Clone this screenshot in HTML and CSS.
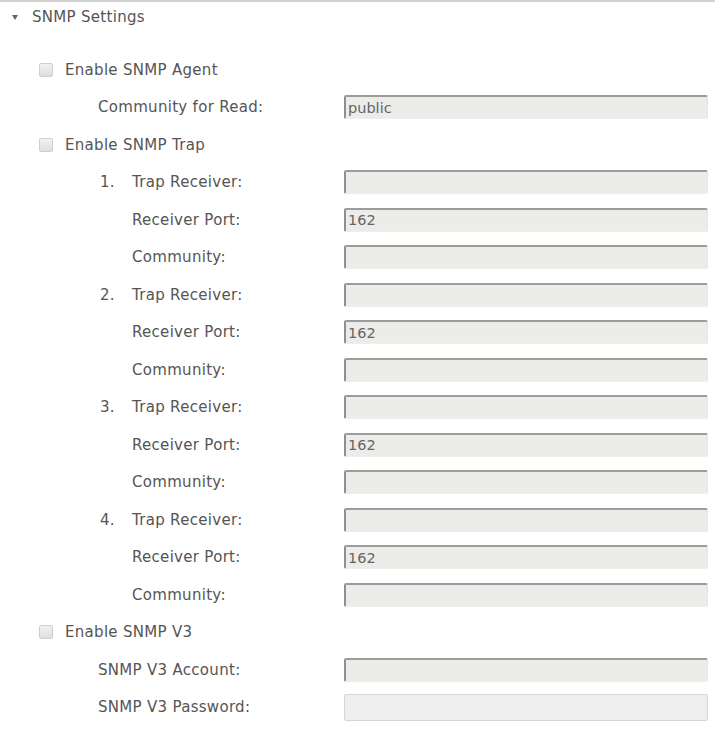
FILE: index.html
```html
<!DOCTYPE html>
<html lang="en">
<head>
  <meta charset="UTF-8" />
  <title>SNMP Settings</title>
  <link rel="stylesheet" href="styles.css">
</head>
<body>
  <div class="settings">
    <div class="title">
      <span class="arrow"></span>
      <span>SNMP Settings</span>
    </div>

    <div class="rows">
      <label class="row check-row"><input type="checkbox" class="box"> Enable SNMP Agent</label>
      <div class="row field-row">
        <span class="label">Community for Read:</span>
        <input class="field" type="text" value="public">
      </div>

      <label class="row check-row"><input type="checkbox" class="box"> Enable SNMP Trap</label>

      <div class="row field-row">
        <span class="label"><span class="num">1.</span>Trap Receiver:</span>
        <input class="field" type="text">
      </div>
      <div class="row field-row">
        <span class="label"><span class="num"></span>Receiver Port:</span>
        <input class="field" type="text" value="162">
      </div>
      <div class="row field-row">
        <span class="label"><span class="num"></span>Community:</span>
        <input class="field" type="text">
      </div>

      <div class="row field-row">
        <span class="label"><span class="num">2.</span>Trap Receiver:</span>
        <input class="field" type="text">
      </div>
      <div class="row field-row">
        <span class="label"><span class="num"></span>Receiver Port:</span>
        <input class="field" type="text" value="162">
      </div>
      <div class="row field-row">
        <span class="label"><span class="num"></span>Community:</span>
        <input class="field" type="text">
      </div>

      <div class="row field-row">
        <span class="label"><span class="num">3.</span>Trap Receiver:</span>
        <input class="field" type="text">
      </div>
      <div class="row field-row">
        <span class="label"><span class="num"></span>Receiver Port:</span>
        <input class="field" type="text" value="162">
      </div>
      <div class="row field-row">
        <span class="label"><span class="num"></span>Community:</span>
        <input class="field" type="text">
      </div>

      <div class="row field-row">
        <span class="label"><span class="num">4.</span>Trap Receiver:</span>
        <input class="field" type="text">
      </div>
      <div class="row field-row">
        <span class="label"><span class="num"></span>Receiver Port:</span>
        <input class="field" type="text" value="162">
      </div>
      <div class="row field-row">
        <span class="label"><span class="num"></span>Community:</span>
        <input class="field" type="text">
      </div>

      <label class="row check-row"><input type="checkbox" class="box"> Enable SNMP V3</label>
      <div class="row field-row">
        <span class="label">SNMP V3 Account:</span>
        <input class="field" type="text">
      </div>
      <div class="row field-row">
        <span class="label">SNMP V3 Password:</span>
        <input class="field flat" type="password">
      </div>
    </div>
  </div>
</body>
</html>
```

FILE: styles.css
```css
body {
  margin: 0;
  background-color: #fff;
  font-family: "DejaVu Sans", Verdana, sans-serif;
  font-size: 15px;
  letter-spacing: 0.3px;
  color: #555;
}
.settings {
  border-top: 2px solid #d2d2d2;
}
.title {
  display: flex;
  align-items: center;
  gap: 14px;
  height: 30px;
  padding-left: 12px;
}
.arrow {
  width: 0;
  height: 0;
  border-left: 3.5px solid transparent;
  border-right: 3.5px solid transparent;
  border-top: 5px solid #666;
}
.rows {
  padding-top: 19px;
}
.row {
  display: flex;
  align-items: center;
  height: 37.5px;
}
.check-row {
  padding-left: 39px;
  gap: 12px;
}
.box {
  appearance: none;
  margin: 0;
  width: 14px;
  height: 14px;
  border: 1px solid #cfcfcf;
  border-radius: 2px;
  background: linear-gradient(#f2f2f2, #dedede);
}
.field-row {
  padding-left: 98px;
}
.label {
  display: flex;
  width: 246px;
}
.num {
  width: 34px;
  padding-left: 2px;
  box-sizing: border-box;
}
.field {
  box-sizing: border-box;
  width: 364px;
  height: 24px;
  margin: 0;
  padding: 0 2px;
  font-family: "DejaVu Sans", Verdana, sans-serif;
  font-size: 14.5px;
  color: #666;
  background-color: #ecece9;
  border-style: solid;
  border-width: 2px 1px 1px 2px;
  border-color: #9c9c9c #e4e4e4 #eeeeee #8f8f8f;
  border-radius: 2px;
  outline: none;
}
.field.flat {
  border-width: 1px;
  border-color: #d6d6d6;
  background-color: #eeeeee;
  height: 27px;
}
```
